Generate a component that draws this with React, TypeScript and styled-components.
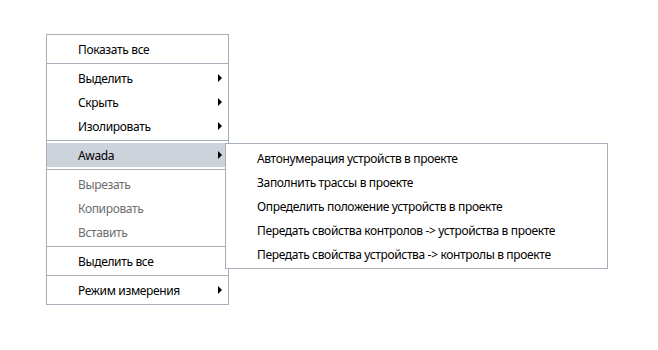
import React from "react";
import styled, { createGlobalStyle } from "styled-components";

const GlobalStyle = createGlobalStyle`
  body {
    margin: 0;
    background: #ffffff;
    font-family: "Segoe UI", "Noto Sans", "Liberation Sans", sans-serif;
  }
`;

interface Item {
  label: string;
  sub?: boolean;
  disabled?: boolean;
  active?: boolean;
  separatorBefore?: boolean;
}

const mainItems: Item[] = [
  { label: "Показать все" },
  { label: "Выделить", sub: true, separatorBefore: true },
  { label: "Скрыть", sub: true },
  { label: "Изолировать", sub: true },
  { label: "Awada", sub: true, active: true, separatorBefore: true },
  { label: "Вырезать", disabled: true, separatorBefore: true },
  { label: "Копировать", disabled: true },
  { label: "Вставить", disabled: true },
  { label: "Выделить все", separatorBefore: true },
  { label: "Режим измерения", sub: true, separatorBefore: true },
];

const awadaItems = [
  "Автонумерация устройств в проекте",
  "Заполнить трассы в проекте",
  "Определить положение устройств в проекте",
  "Передать свойства контролов -> устройства в проекте",
  "Передать свойства устройства -> контролы в проекте",
];

// small black submenu triangle
const SubArrow = () => (
  <ArrowSvg width="5" height="8" viewBox="0 0 5 8">
    <polygon points="0,0 4,4 0,8" fill="#000" />
  </ArrowSvg>
);

const App = () => {
  return (
    <>
      <GlobalStyle />
      <Page>
        <Menu>
          {mainItems.map((item) => (
            <React.Fragment key={item.label}>
              {item.separatorBefore && <Separator />}
              <Row $active={item.active} $disabled={item.disabled}>
                <Label>{item.label}</Label>
                {item.sub && <SubArrow />}
                {item.active && (
                  <SubMenu>
                    {awadaItems.map((s) => (
                      <Row key={s}>
                        <Label>{s}</Label>
                      </Row>
                    ))}
                  </SubMenu>
                )}
              </Row>
            </React.Fragment>
          ))}
        </Menu>
      </Page>
    </>
  );
};

const Page = styled.div`
  width: 658px;
  height: 350px;
  padding: 34px 0 0 46px;
  box-sizing: border-box;
`;

const Menu = styled.div`
  width: 183px;
  box-sizing: border-box;
  border: 1px solid #a7b0b9;
  background: #ffffff;
  padding: 2px 0;
  display: flex;
  flex-direction: column;
`;

const Row = styled.div<{ $active?: boolean; $disabled?: boolean }>`
  position: relative;
  height: 24px;
  display: flex;
  align-items: center;
  padding-left: 31px;
  font-size: 12px;
  letter-spacing: -0.35px;
  color: ${(p) => (p.$disabled ? "#6d6d6d" : "#000000")};
  background: ${(p) => (p.$active ? "#ccd3da" : "transparent")};
`;

const Label = styled.span`
  flex: 1;
  white-space: nowrap;
`;

const ArrowSvg = styled.svg`
  margin-right: 5px;
  display: block;
`;

const Separator = styled.div`
  height: 5px;
  display: flex;
  align-items: center;
  &::after {
    content: "";
    flex: 1;
    height: 1px;
    background: #a7b0b9;
  }
`;

const SubMenu = styled.div`
  position: absolute;
  top: 0;
  left: calc(100% - 3px);
  width: 383px;
  box-sizing: border-box;
  border: 1px solid #a7b0b9;
  background: #ffffff;
  padding: 2px 0;
  display: flex;
  flex-direction: column;
  z-index: 2;
`;

export default App;
